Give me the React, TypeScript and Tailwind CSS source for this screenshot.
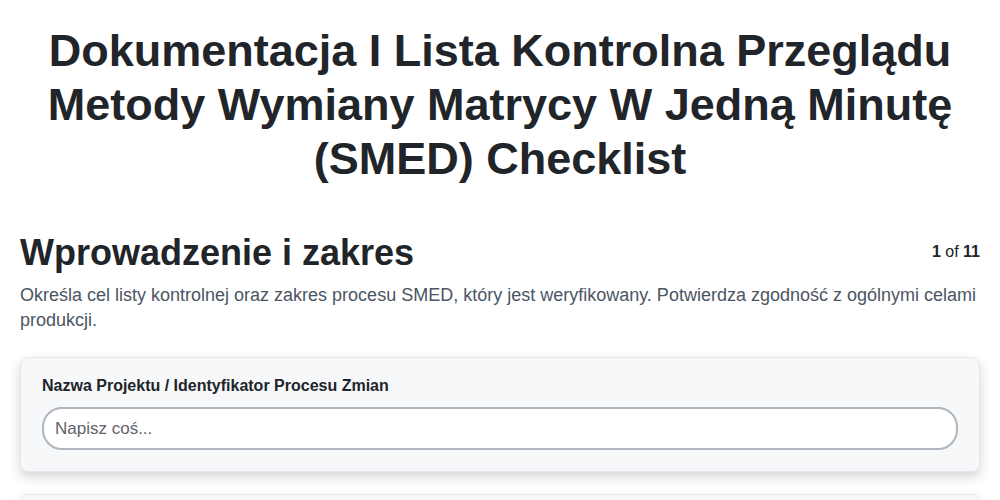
export default function App() {
  return (
    <div className="min-h-screen bg-white px-5 text-[#212529]" style={{ fontFamily: '"Liberation Sans", Arial, sans-serif' }}>
      <h1 className="pt-[24px] text-center text-[45px] font-bold leading-[54px]">
        Dokumentacja I Lista Kontrolna Przeglądu Metody Wymiany Matrycy W Jedną Minutę (SMED) Checklist
      </h1>

      <div className="mt-[45px] flex items-start justify-between">
        <h2 className="text-[36px] font-bold leading-[43px]">Wprowadzenie i zakres</h2>
        <div className="pt-[9px] text-[16px] leading-[24px]">
          <span className="font-bold">1</span> of <span className="font-bold">11</span>
        </div>
      </div>

      <p className="mt-[9px] text-[18px] leading-[25px] text-[#4b5563]">
        Określa cel listy kontrolnej oraz zakres procesu SMED, który jest weryfikowany. Potwierdza zgodność z ogólnymi celami produkcji.
      </p>

      <div className="mt-[24px] rounded-lg border border-[#e5e7eb] bg-[#f7f8fa] px-[21px] pt-[16px] pb-[21px] shadow-[0_5px_12px_rgba(0,0,0,0.17)]">
        <label className="block text-[16px] font-bold leading-[24px]">Nazwa Projektu / Identyfikator Procesu Zmian</label>
        <input
          type="text"
          placeholder="Napisz coś..."
          className="mt-[9px] h-[43px] w-full rounded-[20px] border-2 border-[#b0b6bd] bg-white px-[11px] text-[17px] text-[#212529] placeholder:text-[#5f6368] outline-none"
        />
      </div>

      <div className="mt-[22px] h-[60px] rounded-lg border border-[#e5e7eb] bg-[#f7f8fa] shadow-[0_5px_12px_rgba(0,0,0,0.17)]" />
    </div>
  )
}
